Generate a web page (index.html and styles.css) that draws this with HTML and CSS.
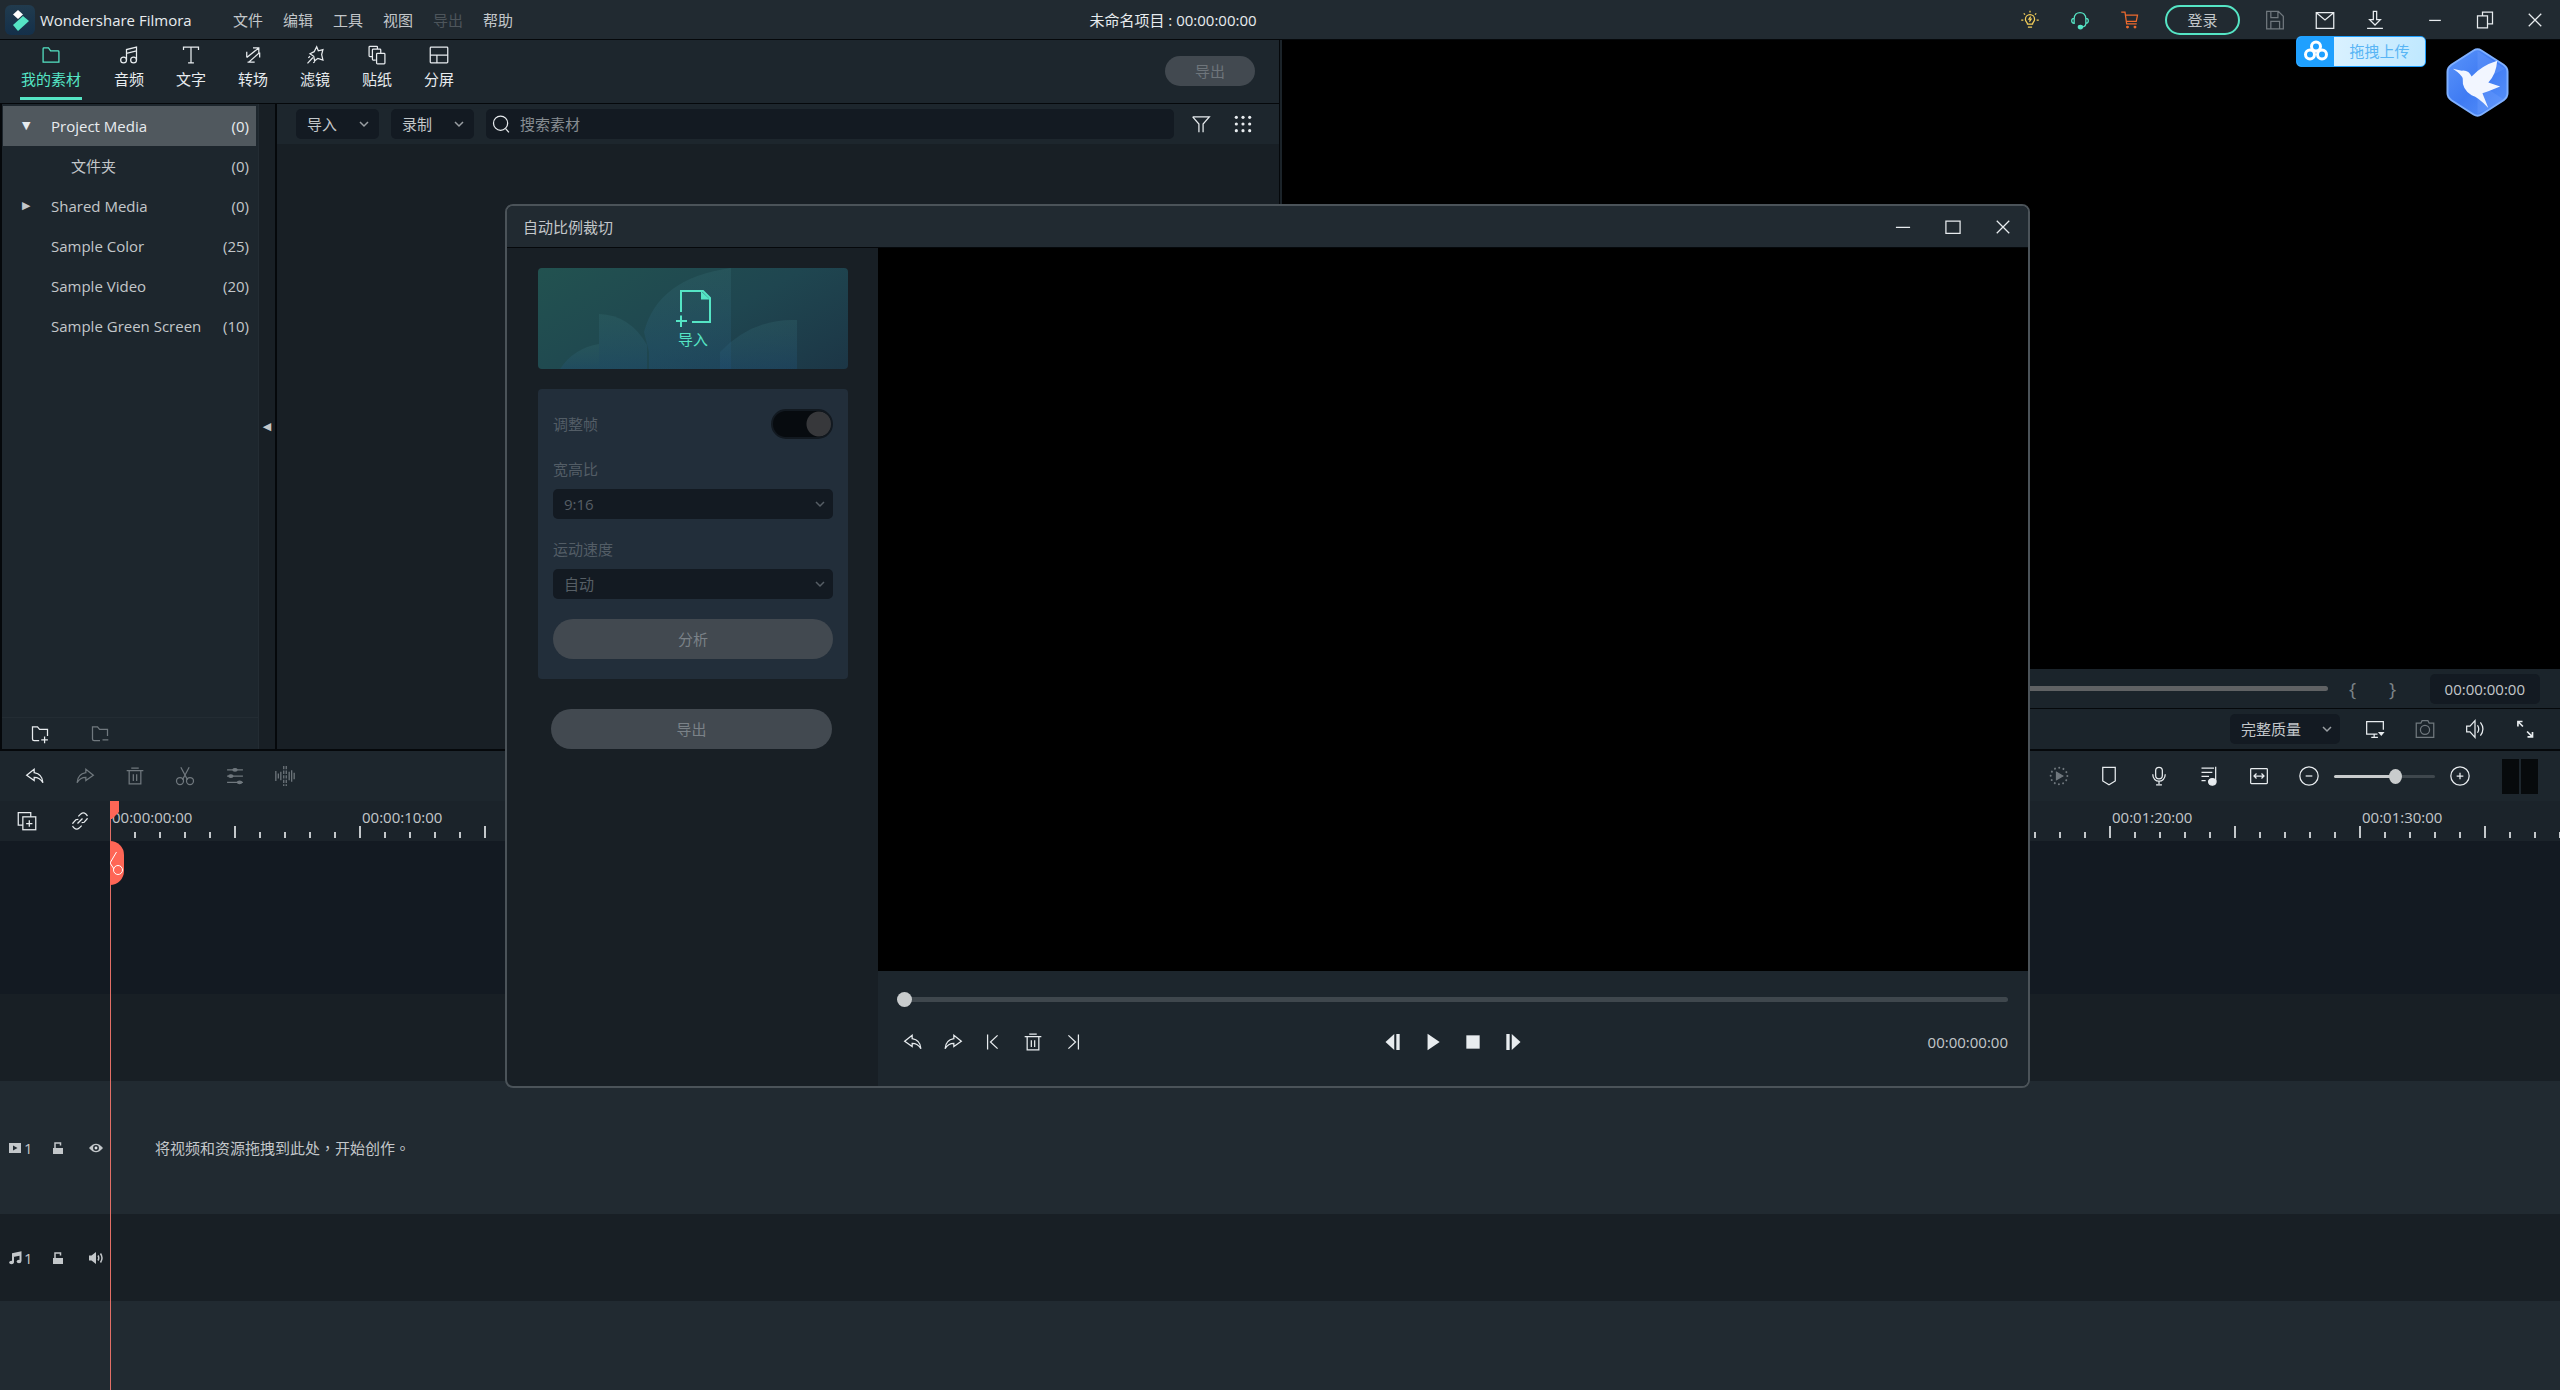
FILE: index.html
```html
<!DOCTYPE html>
<html lang="zh-CN">
<head>
<meta charset="utf-8">
<meta name="viewport" content="width=device-width, initial-scale=1">
<title>Wondershare Filmora</title>
<link rel="stylesheet" href="styles.css">
</head>
<body>
<svg class="sprite" aria-hidden="true">
  <symbol id="i-chevron" viewBox="0 0 12 12"><path d="M2 4l4 4 4-4"/></symbol>
  <symbol id="i-min" viewBox="0 0 24 24"><path d="M5 12.5h14"/></symbol>
  <symbol id="i-close" viewBox="0 0 24 24"><path d="M6 6l12 12M18 6L6 18"/></symbol>
  <symbol id="i-undo" viewBox="0 0 24 24"><path d="M11 4L2 11l9 6.500v-4c4 0 8 2 10.500 6.500-.5-8-4.500-11-10.500-12z"/></symbol>
  <symbol id="i-redo" viewBox="0 0 24 24"><path d="M13 4l9 7-9 6.500v-4c-4 0-8 2-10.500 6.500.5-8 4.500-11 10.500-12z"/></symbol>
  <symbol id="i-trash" viewBox="0 0 24 24"><path d="M7.500 2.500h9M2 5.500h20M5 5.500v16h14v-16M10 10v8M14 10v8"/></symbol>
  <symbol id="i-scissors" viewBox="0 0 24 24"><path d="M7 1.500l8 15M17 1.500L9 16.500"/><circle cx="6" cy="18" r="4.200"/><circle cx="18" cy="18" r="4.200"/></symbol>
  <symbol id="i-lock" viewBox="0 0 16 16"><path d="M3 8h10v6H3z" fill="currentColor" stroke="none"/><path d="M5 8V3h5.500v2.500"/></symbol>
  <symbol id="i-headphone" viewBox="0 0 24 24"><path d="M5 10.500C5 0.500 19 0.500 19 10.500M5 10v6c-4 0-4-6 0-6zM19 10v6c4 0 4-6 0-6zM19 16c0 3-2 4.500-5 4.500"/><ellipse cx="12.500" cy="20.500" rx="2.500" ry="2" fill="currentColor"/></symbol>
</svg>

<div class="app">
  <header class="titlebar">
    <div class="titlebar-left">
      <svg class="logo" viewBox="0 0 30 30" aria-hidden="true">
        <defs><linearGradient id="lg" x1="0" y1="0" x2="0" y2="1"><stop offset="0" stop-color="#213b4e"/><stop offset="1" stop-color="#14304a"/></linearGradient></defs>
        <rect width="30" height="30" rx="6" fill="url(#lg)"/>
        <path d="M13 5l5 4.500-5 4.500-5-4.500z" fill="#fff"/>
        <path d="M18 11l6 5-11 10-5-6z" fill="#55e5c5"/>
      </svg>
      <span class="app-name">Wondershare Filmora</span>
      <nav class="menu">
        <button>文件</button><button>编辑</button><button>工具</button><button>视图</button><button disabled>导出</button><button>帮助</button>
      </nav>
    </div>
    <div class="project-title">未命名项目 : 00:00:00:00</div>
    <div class="titlebar-right">
      <button class="cell yellow" aria-label="提示"><svg class="icon" viewBox="0 0 24 24"><path d="M9 17c0-2-2.500-3-2.500-6a5.500 5.500 0 0 1 11 0c0 3-2.500 4-2.500 6zM9.500 20.500h5M12 1v2M4.500 4l1.500 1.500M19.500 4L18 5.500M1.500 12h2.500M20 12h2.500M12.800 8l-2 3h2.500l-2 3"/></svg></button>
      <button class="cell mint" aria-label="客服"><svg class="icon"><use href="#i-headphone"/></svg></button>
      <button class="cell orange" aria-label="购物车"><svg class="icon" viewBox="0 0 24 24"><path d="M1.500 2.500H6l2 14h12M6.500 6H21l-1.500 7.500H8"/><circle cx="9" cy="20.500" r="1" fill="currentColor"/><circle cx="18" cy="20.500" r="1" fill="currentColor"/></svg></button>
      <button class="login">登录</button>
      <button class="cell dim" aria-label="保存"><svg class="icon" viewBox="0 0 24 24"><path d="M2 1.500H16l6 6v15H2zM7 1.500v7.500h8.500V1.500M7 22.500v-9H17.500v9"/></svg></button>
      <button class="cell" aria-label="消息"><svg class="icon" viewBox="0 0 24 24"><path d="M1.500 3h21v19h-21zM2 3.500l10 8.500 10-8.500"/></svg></button>
      <button class="cell" aria-label="下载"><svg class="icon" viewBox="0 0 24 24"><path d="M10 1.500h4v10h4.500L12 18 5.500 11.500H10zM2.500 22h19"/></svg></button>
      <div class="window-buttons">
        <button class="cell" aria-label="最小化"><svg class="icon"><use href="#i-min"/></svg></button>
        <button class="cell" aria-label="还原"><svg class="icon" viewBox="0 0 24 24"><path d="M3 7h12v14.500H3zM9 7V2.500h12v14h-6"/></svg></button>
        <button class="cell" aria-label="关闭"><svg class="icon" viewBox="0 0 24 24"><path d="M4.500 4.500l15 15M19.500 4.500l-15 15"/></svg></button>
      </div>
    </div>
  </header>

  <main class="workspace">
    <section class="media">
      <div class="tabs">
        <button class="tab active"><svg class="icon" viewBox="0 0 24 24"><path d="M2.500 20.500V4.500q0-1 1-1H9L11.500 7h9q1 0 1 1v12.500z"/></svg>我的素材</button>
        <button class="tab"><svg class="icon" viewBox="0 0 24 24"><circle cx="5.500" cy="18" r="3.500"/><circle cx="17.500" cy="18" r="3.500"/><path d="M9 18V5.500L21 2.500V18M9 10l12-3"/></svg>音频</button>
        <button class="tab"><svg class="icon" viewBox="0 0 24 24"><path d="M3 6V2.500h18V6M12 2.500v19M8.500 21.500h7"/></svg>文字</button>
        <button class="tab"><svg class="icon" viewBox="0 0 24 24"><path d="M12 3.500h7v6.500M19 3.500L4.500 15M4.500 8v7M12 20.500H5.500M20 9L7 20.500h7M20 9v6"/></svg>转场</button>
        <button class="tab"><svg class="icon" viewBox="0 0 24 24"><path d="M14 2l2 5 5.500-1.500-1.500 6 1.500 6.500-6-2-4 3-1-5.500L6 10.500l5-2.500zM9.500 15L3 22M6 13.500l-2 2M12 19.500l-2 2"/></svg>滤镜</button>
        <button class="tab"><svg class="icon" viewBox="0 0 24 24"><path d="M6.500 14h-3q-1 0-1-1V2.500q0-1 1-1h8q1 0 1 1V5M10.500 18h-3q-1 0-1-1V6q0-1 1-1h8q1 0 1 1v4"/><rect x="11.500" y="10" width="10" height="12.500" rx="1"/></svg>贴纸</button>
        <button class="tab"><svg class="icon" viewBox="0 0 24 24"><rect x="1.500" y="2.500" width="21" height="19" rx="1"/><path d="M1.500 12h21M9.500 12v9.500"/></svg>分屏</button>
        <button class="pill export-top" disabled>导出</button>
      </div>
      <div class="media-body">
        <aside class="sidebar">
          <ul class="tree">
            <li class="selected"><span class="arrow">▼</span><span class="name">Project Media</span><span>(0)</span></li>
            <li><span class="arrow"></span><span class="name child">文件夹</span><span>(0)</span></li>
            <li><span class="arrow">▶</span><span class="name">Shared Media</span><span>(0)</span></li>
            <li><span class="arrow"></span><span class="name">Sample Color</span><span>(25)</span></li>
            <li><span class="arrow"></span><span class="name">Sample Video</span><span>(20)</span></li>
            <li><span class="arrow"></span><span class="name">Sample Green Screen</span><span>(10)</span></li>
          </ul>
          <div class="sidebar-foot">
            <button aria-label="新建文件夹"><svg class="icon" viewBox="0 0 24 24"><path d="M11 20H5q-2 0-2-2V3.500h6L11.500 6.500H21v8M17.500 15v8M13.500 19h8"/></svg></button>
            <button class="dim" aria-label="删除文件夹"><svg class="icon" viewBox="0 0 24 24"><path d="M12 20H5q-2 0-2-2V3.500h6L11.500 6.500H21v8M15 19h7"/></svg></button>
          </div>
        </aside>
        <button class="collapse" aria-label="收起侧栏">◀</button>
        <div class="library">
          <div class="library-bar">
            <div class="select-box"><select aria-label="导入"><option>导入</option></select><svg class="chev"><use href="#i-chevron"/></svg></div>
            <div class="select-box"><select aria-label="录制"><option>录制</option></select><svg class="chev"><use href="#i-chevron"/></svg></div>
            <label class="search"><svg class="icon" viewBox="0 0 24 24"><circle cx="11.500" cy="11" r="8.500"/><path d="M17.500 17.500l4 4.500"/></svg><input type="text" placeholder="搜索素材" aria-label="搜索素材"></label>
            <button class="tool-filter" aria-label="筛选"><svg class="icon" viewBox="0 0 24 24"><path d="M2 3.500h20l-7.500 8.500v10M2 3.500L9.500 12v10"/></svg></button>
            <button aria-label="视图"><svg class="icon" viewBox="0 0 24 24"><g fill="currentColor" stroke="none"><circle cx="4" cy="4" r="1.900"/><circle cx="12" cy="4" r="1.900"/><circle cx="20" cy="4" r="1.900"/><circle cx="4" cy="12" r="1.900"/><circle cx="12" cy="12" r="1.900"/><circle cx="20" cy="12" r="1.900"/><circle cx="4" cy="20" r="1.900"/><circle cx="12" cy="20" r="1.900"/><circle cx="20" cy="20" r="1.900"/></g></svg></button>
          </div>
        </div>
      </div>
    </section>

    <section class="preview">
      <div class="screen"></div>
      <div class="preview-row scrub-row">
        <input class="range scrub" type="range" min="0" max="100" value="0" aria-label="播放进度">
        <button class="brace" aria-label="入点">{</button>
        <button class="brace" aria-label="出点">}</button>
        <span class="time-box">00:00:00:00</span>
      </div>
      <div class="preview-row options-row">
        <div class="select-box quality"><select aria-label="预览质量"><option>完整质量</option></select><svg class="chev"><use href="#i-chevron"/></svg></div>
        <button class="cell" aria-label="显示器"><svg class="icon" viewBox="0 0 24 24"><path d="M15 18H2V3h20v10M11 18v4M7.500 22h8"/><path d="M15.500 15.500h8l-4 5z" fill="currentColor" stroke="none"/></svg></button>
        <button class="cell dim" aria-label="快照"><svg class="icon" viewBox="0 0 24 24"><path d="M1.500 5H7l1.500-3h7L17 5h5.500v17h-21z"/><circle cx="12" cy="13" r="5.500"/></svg></button>
        <button class="cell" aria-label="音量"><svg class="icon" viewBox="0 0 24 24"><path d="M2 8.500h4l6-6.500v20l-6-6.500H2zM15 7.500q3 4.500 0 9M18.500 4q6 8 0 16"/></svg></button>
        <button class="cell" aria-label="全屏"><svg class="icon" viewBox="0 0 24 24"><path d="M3.500 9V3H9M3.500 3l6 6M21 15.500V21.500h-6M21 21.500l-6.500-6.500" stroke-width="2"/></svg></button>
      </div>
    </section>
  </main>

  <section class="timeline">
    <div class="timeline-tools">
      <button class="cell" aria-label="撤销"><svg class="icon"><use href="#i-undo"/></svg></button>
      <button class="cell dim" aria-label="重做"><svg class="icon"><use href="#i-redo"/></svg></button>
      <button class="cell dim" aria-label="删除"><svg class="icon"><use href="#i-trash"/></svg></button>
      <button class="cell dim" aria-label="分割"><svg class="icon"><use href="#i-scissors"/></svg></button>
      <button class="cell dim" aria-label="调整"><svg class="icon" viewBox="0 0 24 24"><path d="M2.500 4.500h19M2.500 12h19M2.500 19.500h19"/><g fill="currentColor"><ellipse cx="12" cy="4.500" rx="2.500" ry="1.500"/><ellipse cx="7" cy="12" rx="2.500" ry="1.500"/><ellipse cx="17.500" cy="19.500" rx="2.500" ry="1.500"/></g></svg></button>
      <button class="cell dim" aria-label="音频波形"><svg class="icon" viewBox="0 0 24 24"><path d="M1 6v12M4 9v6M7 7v10M17 7v10M20 5v14M23 8v8"/><path d="M10.500 0v24M13.500 0v24" stroke-dasharray="4 1.500"/></svg></button>
      <div class="tools-right">
        <button class="cell dim" aria-label="渲染"><svg class="icon" viewBox="0 0 24 24"><circle cx="12" cy="12" r="10" stroke-width="2.400" stroke-linecap="round" stroke-dasharray="0.010 5.226"/><path d="M9 7.500l7.500 4.500L9 16.500z" fill="currentColor"/></svg></button>
        <button class="cell" aria-label="标记"><svg class="icon" viewBox="0 0 24 24"><path d="M4.500 1.500h15V18L12 22.500 4.500 18z"/></svg></button>
        <button class="cell" aria-label="录音"><svg class="icon" viewBox="0 0 24 24"><rect x="8" y="1.500" width="8" height="14" rx="4"/><path d="M4.500 10c0 11 15 11 15 0M12 18.500v3M8.500 22.500h7"/></svg></button>
        <button class="cell" aria-label="音频混合"><svg class="icon" viewBox="0 0 24 24"><path d="M3 2.500h15M3 7.500h13M3 12.500h9M3 17.500h5M20 1v17"/><ellipse cx="16" cy="19" rx="4.500" ry="4" fill="currentColor"/></svg></button>
        <button class="cell" aria-label="适应窗口"><svg class="icon" viewBox="0 0 24 24"><rect x="2" y="3" width="20" height="18" rx="1"/><path d="M6.500 12h11M9 9l-3 3 3 3M15 9l3 3-3 3"/></svg></button>
        <button class="cell" aria-label="缩小"><svg class="icon" viewBox="0 0 24 24"><circle cx="12" cy="12" r="11"/><path d="M8 12h8"/></svg></button>
        <input class="range zoom" type="range" min="0" max="100" value="62" aria-label="缩放">
        <button class="cell" aria-label="放大"><svg class="icon" viewBox="0 0 24 24"><circle cx="12" cy="12" r="11"/><path d="M8 12h8M12 8v8"/></svg></button>
        <div class="meters"><i></i><i></i></div>
      </div>
    </div>
    <div class="ruler">
      <div class="ruler-head">
        <button aria-label="添加轨道"><svg class="icon" viewBox="0 0 24 24"><path d="M7 17H1.500V2h15v5"/><rect x="7" y="7" width="15.500" height="15.500"/><path d="M11 15h7.500M14.750 11v8"/></svg></button>
        <button aria-label="链接"><svg class="icon" viewBox="0 0 24 24"><path d="M10 6.500l3-3q3-2.500 6 0t1.500 6l-3.500 4-3 .5M14 17.500l-3 3q-3 2.500-6 0t-1.500-6l3.500-4 3-.5M9 15l6-6" stroke-dasharray="14 2.500"/></svg></button>
      </div>
      <div class="ruler-scale">
        <span>00:00:00:00</span><span>00:00:10:00</span><span>00:00:20:00</span><span>00:00:30:00</span><span>00:00:40:00</span><span>00:00:50:00</span><span>00:01:00:00</span><span>00:01:10:00</span><span>00:01:20:00</span><span>00:01:30:00</span>
      </div>
    </div>
    <div class="track blank-deep"></div>
    <div class="track blank-dark"></div>
    <div class="track video-track">
      <div class="track-head">
        <svg class="mini" viewBox="0 0 16 16"><path d="M2 3h12v10H2zM6 5.500v5l4.500-2.500z" fill="currentColor" fill-rule="evenodd" stroke="none"/></svg><span class="num">1</span>
        <button aria-label="锁定"><svg class="mini"><use href="#i-lock"/></svg></button>
        <button aria-label="可见"><svg class="mini" viewBox="0 0 16 16"><path d="M1 8q7-8.500 14 0-7 8.500-14 0z" fill="currentColor" stroke="none"/><circle cx="8" cy="8" r="2.200" fill="#dfe3e6" stroke="#212a31"/></svg></button>
      </div>
      <p class="drop-hint" lang="zh-TW">将视频和资源拖拽到此处，开始创作。</p>
    </div>
    <div class="track audio-track">
      <div class="track-head">
        <svg class="mini" viewBox="0 0 16 16"><path d="M6 12.500V4l7.500-1.500V11M6 6l7.500-1.500" stroke-width="2"/><ellipse cx="4.500" cy="12.500" rx="2.300" ry="1.800" fill="currentColor" stroke="none"/><ellipse cx="12" cy="11.500" rx="2.300" ry="1.800" fill="currentColor" stroke="none"/></svg><span class="num">1</span>
        <button aria-label="锁定"><svg class="mini"><use href="#i-lock"/></svg></button>
        <button aria-label="静音"><svg class="mini" viewBox="0 0 16 16"><path d="M1 5.500h2.500L8 2v12l-4.500-3.500H1z" fill="currentColor" stroke="none"/><path d="M10 5.500q1.500 2.500 0 5M12.500 3.500q3 4.500 0 9"/></svg></button>
      </div>
    </div>
    <div class="track blank-light"></div>
    <div class="playhead">
      <svg class="flag" viewBox="0 0 9 18"><path d="M0 0h9v11l-7 7H0z" fill="#ff6656"/></svg>
      <svg class="cutter" viewBox="0 0 14 44"><path d="M0 0a14 14 0 0 1 14 14v16a14 14 0 0 1-14 14z" fill="#ff6656"/><path d="M6.500 11L0 22l4 6" fill="none" stroke="#fff"/><circle cx="8" cy="29" r="4.500" fill="none" stroke="#fff"/></svg>
    </div>
  </section>

  <div class="upload-badge">
    <svg viewBox="0 0 37 31" aria-hidden="true"><g fill="none" stroke="#fff" stroke-width="3"><circle cx="19" cy="10.500" r="4.500"/><circle cx="13" cy="18.500" r="4.500"/><circle cx="25" cy="18.500" r="4.500"/></g></svg>
    <span>拖拽上传</span>
  </div>
  <svg class="bird-badge" viewBox="0 0 64 70" aria-hidden="true">
    <defs><linearGradient id="bg" x1="0" y1="0" x2="1" y2="1"><stop offset="0" stop-color="#5b95fa"/><stop offset=".5" stop-color="#3f7bf3"/><stop offset="1" stop-color="#5a94fb"/></linearGradient></defs>
    <path d="M28 2.500q4-2.500 8 0L58.500 17q4 3 4 7v22q0 4-4 7L36 67.500q-4 2.500-8 0L5.500 53q-4-3-4-7V24q0-4 4-7z" fill="url(#bg)" stroke="#7fb0ff" stroke-width="2"/>
    <path d="M32 35V3l28 18zM32 35l28 18-28 14z" fill="#7aa8ff" opacity=".25"/>
    <path d="M7 21l9 2q7-1 10 6Q36 18 52 13q-1 14-9 22l12 4-12 5-6 2 6 15Q33 50 26 48q-10-6-9-17-1-4-10-10z" fill="#f2f6ff"/>
  </svg>

  <div class="dialog" role="dialog" aria-labelledby="dlg-title">
    <header class="dialog-title">
      <h1 id="dlg-title">自动比例裁切</h1>
      <button class="cell" aria-label="最小化"><svg class="icon" viewBox="0 0 24 24"><path d="M3.500 12.500h17"/></svg></button>
      <button class="cell" aria-label="最大化"><svg class="icon" viewBox="0 0 24 24"><path d="M3.500 5h17v14.500h-17z"/></svg></button>
      <button class="cell" aria-label="关闭"><svg class="icon" viewBox="0 0 24 24"><path d="M4.500 4.500l15 15M19.500 4.500l-15 15"/></svg></button>
    </header>
    <div class="dialog-body">
      <div class="dialog-side">
        <button class="import-card">
          <svg class="petals" viewBox="0 0 310 101" preserveAspectRatio="none" aria-hidden="true">
            <defs><linearGradient id="pt" x1="0" y1="0" x2="0" y2="1"><stop offset="0" stop-color="#3a7378" stop-opacity=".25"/><stop offset="1" stop-color="#205078" stop-opacity=".35"/></linearGradient></defs>
            <g fill="url(#pt)"><path d="M22 101Q36 80 61 76V101z"/><path d="M61 46Q92 47 109 77V101H61z"/><path d="M106 64Q120 10 193 0V101H111V84z"/><path d="M182 101V84Q215 50 259 52V101z"/></g>
          </svg>
          <svg class="import-icon" viewBox="0 0 36 38" aria-hidden="true"><path d="M6 23V2h22l7 7v24H17M1 32h11M6 26.500V38" fill="none" stroke="#55e5c5" stroke-width="2"/><path d="M26 2l9 8.500h-9z" fill="#55e5c5"/></svg>
          <span>导入</span>
        </button>
        <div class="settings">
          <div class="setting-toggle"><label for="adj">调整帧</label><input id="adj" class="toggle" type="checkbox" checked disabled></div>
          <label for="ratio">宽高比</label>
          <div class="select-box"><select id="ratio" disabled><option>9:16</option></select><svg class="chev"><use href="#i-chevron"/></svg></div>
          <label for="speed">运动速度</label>
          <div class="select-box"><select id="speed" disabled><option>自动</option></select><svg class="chev"><use href="#i-chevron"/></svg></div>
          <button class="pill" disabled>分析</button>
        </div>
        <button class="pill export-dialog" disabled>导出</button>
      </div>
      <div class="dialog-main">
        <div class="screen"></div>
        <div class="dialog-controls">
          <input class="range seek" type="range" min="0" max="100" value="0" aria-label="进度">
          <div class="control-row">
            <div class="controls-left">
              <button aria-label="撤销"><svg class="icon"><use href="#i-undo"/></svg></button>
              <button aria-label="重做"><svg class="icon"><use href="#i-redo"/></svg></button>
              <button aria-label="上一帧"><svg class="icon" viewBox="0 0 24 24"><path d="M5.500 3v18M17.500 4L9 12l8.500 8"/></svg></button>
              <button aria-label="删除"><svg class="icon"><use href="#i-trash"/></svg></button>
              <button aria-label="下一帧"><svg class="icon" viewBox="0 0 24 24"><path d="M18.500 3v18M6.500 4L15 12l-8.500 8"/></svg></button>
            </div>
            <div class="controls-mid">
              <button aria-label="后退"><svg class="icon" viewBox="0 0 24 24"><path d="M13.500 2.500v19L3 12zM16 2.500h4v19h-4z" fill="currentColor" stroke="none"/></svg></button>
              <button aria-label="播放"><svg class="icon" viewBox="0 0 24 24"><path d="M5.500 2L20 12 5.500 22z" fill="currentColor" stroke="none"/></svg></button>
              <button aria-label="停止"><svg class="icon" viewBox="0 0 24 24"><path d="M4 4h16v16H4z" fill="currentColor" stroke="none"/></svg></button>
              <button aria-label="前进"><svg class="icon" viewBox="0 0 24 24"><path d="M10.500 2.500v19L21 12zM4 2.500h4v19H4z" fill="currentColor" stroke="none"/></svg></button>
            </div>
            <span class="dialog-time">00:00:00:00</span>
          </div>
        </div>
      </div>
    </div>
  </div>
</div>
</body>
</html>
```
FILE: styles.css
```css
:root {
  --panel: #1d262d;
  --bar: #212a31;
  --dark: #181f25;
  --deep: #131a22;
  --line: #05080b;
  --text: #c3c7ca;
  --bright: #e8ecef;
  --dim: #70787e;
  --mint: #55e5c5;
}

* { box-sizing: border-box; }

body {
  margin: 0;
  background: var(--panel);
  color: var(--text);
  font: 15px/20px "Open Sans", "Noto Sans CJK SC", sans-serif;
}

button, input, select { font: inherit; color: inherit; }
button {
  display: flex;
  align-items: center;
  justify-content: center;
  padding: 0;
  border: 0;
  background: none;
}
ul, p, h1 { margin: 0; padding: 0; }

.sprite { display: none; }
.icon, .mini, .chev {
  flex: none;
  fill: none;
  stroke: currentColor;
  stroke-width: 1.5;
}
.icon { width: 20px; height: 20px; }
.mini { width: 16px; height: 16px; }
.chev { width: 12px; height: 12px; color: #9a9fa3; }

.cell { width: 50px; height: 100%; color: var(--bright); }
.dim, .cell.dim { color: var(--dim); }
.cell.yellow { color: #f5cf5a; }
.cell.mint { color: var(--mint); }
.cell.orange { color: #ee6a2e; }

.app {
  position: relative;
  display: grid;
  grid-template-columns: minmax(0, 1fr);
  grid-template-rows: 40px 1fr auto;
  min-height: 100vh;
  overflow: hidden;
}

/* title bar */
.titlebar {
  display: flex;
  background: var(--bar);
  border-bottom: 1px solid var(--line);
}
.titlebar-left { display: flex; align-items: center; padding-left: 5px; }
.logo { width: 30px; height: 30px; }
.app-name { margin-left: 5px; width: 193px; color: var(--bright); white-space: nowrap; }
.menu { display: flex; gap: 20px; }
.menu button:disabled { color: #4d555b; }
.project-title { flex: 1; align-self: center; text-align: center; color: var(--bright); }
.titlebar-right {
  display: flex;
  align-items: center;
  justify-content: flex-end;
  width: 28.4%;
}
.login {
  width: 75px;
  height: 30px;
  margin: 0 10px;
  border: 2px solid var(--mint);
  border-radius: 15px;
}
.window-buttons { display: flex; height: 100%; margin-left: 10px; }

/* workspace */
.workspace { display: grid; grid-template-columns: 1fr 1fr; }
.media {
  display: flex;
  flex-direction: column;
  border-right: 1px solid var(--line);
}
.tabs {
  display: flex;
  height: 64px;
  padding: 0 24px 0 20px;
  border-bottom: 1px solid var(--line);
}
.tab {
  flex-direction: column;
  justify-content: flex-start;
  gap: 4px;
  width: 62px;
  height: 60px;
  padding-top: 5px;
  color: var(--bright);
  border-bottom: 3px solid transparent;
}
.tab.active { margin-right: 16px; color: var(--mint); border-color: var(--mint); }
.pill {
  height: 40px;
  border-radius: 20px;
  background: #424950;
  color: #7b8288;
}
.export-top { width: 90px; height: 30px; margin: 16px 0 0 auto; color: #6e757b; }

.media-body { display: flex; flex: 1; }
.sidebar {
  display: flex;
  flex-direction: column;
  width: 259px;
  border-left: 2px solid var(--line);
  border-right: 1px solid #232c33;
}
.tree { flex: 1; padding: 2px 2px 0 1px; list-style: none; }
.tree li { display: flex; align-items: center; height: 40px; padding-right: 7px; }
.tree .selected { background: #50585e; color: var(--bright); }
.arrow { width: 48px; padding-left: 19px; font: 11px/20px "DejaVu Sans", sans-serif; }
.name { flex: 1; }
.name.child { padding-left: 20px; }
.sidebar-foot {
  display: flex;
  gap: 40px;
  height: 32px;
  padding-left: 28px;
  border-top: 1px solid #232c33;
  color: var(--bright);
}
.collapse {
  width: 16px;
  background: var(--dark);
  font: 11px/20px "DejaVu Sans", sans-serif;
}
.library { flex: 1; border-left: 2px solid var(--line); background: var(--dark); }
.library-bar {
  display: flex;
  align-items: center;
  gap: 12px;
  height: 40px;
  padding: 0 26px 0 19px;
  background: var(--panel);
  color: var(--bright);
}

.select-box {
  display: flex;
  align-items: center;
  width: 83px;
  height: 30px;
  padding-right: 9px;
  border-radius: 5px;
  background: var(--deep);
  color: var(--text);
}
.select-box select {
  flex: 1;
  min-width: 0;
  height: 30px;
  padding: 0 0 0 11px;
  border: 0;
  background: none;
  appearance: none;
  opacity: 1;
}
.search {
  display: flex;
  flex: 1;
  align-items: center;
  height: 30px;
  padding-left: 5px;
  border-radius: 5px;
  background: var(--deep);
}
.search input { flex: 1; margin-left: 9px; padding: 0; border: 0; background: none; outline: 0; }
.search input::placeholder { color: #868c91; opacity: 1; }
.tool-filter { margin: 0 10px 0 5px; }

/* preview */
.preview {
  display: flex;
  flex-direction: column;
  border-left: 2px solid #1b2329;
}
.screen { flex: 1; background: #000; }
.preview-row { display: flex; align-items: center; height: 40px; background: #1b242b; }
.scrub-row { padding: 0 20px; border-bottom: 1px solid var(--line); }
.options-row { justify-content: flex-end; padding-right: 10px; }
.quality { width: 110px; margin-right: 10px; padding-right: 7px; }
.brace { width: 40px; color: #7d8489; font-size: 19px; }
.brace:first-of-type { margin-left: 5px; }
.time-box {
  margin-left: 17px;
  padding: 5px 15px;
  border-radius: 5px;
  background: var(--deep);
}

.range { --track: #3f474d; height: 16px; margin: 0; appearance: none; background: none; }
.range::-webkit-slider-runnable-track { height: 5px; border-radius: 3px; background: var(--track); }
.range::-webkit-slider-thumb {
  appearance: none;
  width: 15px;
  height: 15px;
  margin-top: -5px;
  border-radius: 50%;
  background: #c9cccd;
}
.scrub { --track: #606264; flex: 1; }

/* timeline */
.timeline { position: relative; border-top: 2px solid var(--line); }
.timeline-tools { display: flex; height: 50px; padding-left: 10px; }
.tools-right { display: flex; align-items: center; margin-left: auto; padding-right: 22px; }
.zoom { --track: linear-gradient(90deg, #c9cccd 60%, #3f474d 60%); width: 101px; }
.zoom::-webkit-slider-runnable-track { height: 3px; }
.zoom::-webkit-slider-thumb { width: 13px; margin-top: -6px; }
.meters { display: flex; gap: 2px; margin-left: 17px; }
.meters i { width: 17px; height: 35px; background: #070a0c; }

.ruler { display: flex; height: 40px; background: #1b232a; }
.ruler-head {
  display: flex;
  flex: none;
  gap: 33px;
  width: 110px;
  padding-left: 17px;
  color: var(--bright);
}
.ruler-scale {
  display: flex;
  flex: 1;
  min-width: 0;
  overflow: hidden;
  background:
    linear-gradient(90deg, #c3c7ca 2px, transparent 2px) 124px 25px / 125px 12px repeat-x,
    linear-gradient(90deg, #c3c7ca 2px, transparent 2px) 24px 31px / 25px 6px repeat-x;
}
.ruler-scale span { flex: none; width: 250px; padding: 6px 0 0 2px; }

.track { display: flex; align-items: center; background: var(--bar); }
.blank-deep { height: 153px; background: var(--deep); }
.blank-dark { height: 87px; background: var(--dark); }
.video-track { height: 133px; }
.audio-track { height: 87px; background: var(--dark); }
.blank-light { height: 89px; }
.track-head { display: flex; align-items: center; width: 110px; padding-left: 7px; }
.num { width: 27px; padding-left: 1px; }
.track-head button + button { margin-left: 22px; }
.drop-hint { padding-left: 45px; font-family: "Noto Sans CJK TC", sans-serif; }

.playhead {
  position: absolute;
  top: 50px;
  bottom: 0;
  left: 110px;
  border-left: 1px solid #e26f66;
}
.flag, .cutter { position: absolute; left: -1px; }
.flag { top: 0; width: 9px; height: 18px; }
.cutter { top: 40px; width: 14px; height: 44px; }

/* floating helpers of other programs */
.upload-badge {
  position: absolute;
  top: 36px;
  right: 134px;
  display: flex;
  width: 130px;
  height: 31px;
  border: 1px solid #1fa0ff;
  border-radius: 5px;
  background: linear-gradient(100deg, #e4f5ff, #bfe8ff);
  overflow: hidden;
  color: #58b5f5;
}
.upload-badge svg { width: 37px; height: 31px; margin-top: -1px; background: #1fa0ff; }
.upload-badge span { flex: 1; padding-top: 4px; text-align: center; }
.bird-badge { position: absolute; top: 48px; right: 51px; width: 63px; height: 69px; }

/* auto reframe dialog */
.dialog {
  position: absolute;
  inset: 204px 530px 302px 505px;
  display: flex;
  flex-direction: column;
  border: 2px solid #4b5359;
  border-radius: 8px;
  background: var(--dark);
  overflow: hidden;
}
.dialog-title {
  display: flex;
  height: 42px;
  padding-left: 16px;
  border-bottom: 1px solid var(--line);
  background: var(--bar);
}
.dialog-title h1 { flex: 1; align-self: center; font: inherit; }
.dialog-body { display: flex; flex: 1; }
.dialog-side { display: flex; flex-direction: column; width: 371px; padding: 20px 30px 0 31px; }
.import-card {
  position: relative;
  flex-direction: column;
  gap: 2px;
  height: 101px;
  border-radius: 4px;
  background: linear-gradient(150deg, #225250, #1f4650 55%, #1c3646);
  color: var(--mint);
  overflow: hidden;
}
.petals { position: absolute; inset: 0; width: 100%; height: 100%; }
.import-icon { position: relative; width: 36px; height: 38px; }
.import-card span { position: relative; }

.settings {
  display: flex;
  flex-direction: column;
  gap: 10px;
  margin-top: 20px;
  padding: 20px 15px;
  border-radius: 4px;
  background: #222e3a;
  color: #535d66;
}
.setting-toggle {
  display: flex;
  align-items: center;
  justify-content: space-between;
  height: 30px;
  margin-bottom: 10px;
}
.settings .select-box { width: auto; margin-bottom: 10px; padding-right: 7px; color: #565e65; }
.settings .chev { color: #565e65; }
.toggle {
  width: 62px;
  height: 30px;
  margin: 0;
  padding: 2px;
  appearance: none;
  border: 2px solid #121920;
  border-radius: 15px;
  background: radial-gradient(circle at 46px 13px, #37383b 12px, #070b0f 13px);
}
.export-dialog { margin: 30px 16px 0 13px; }

.dialog-main { display: flex; flex: 1; flex-direction: column; }
.dialog-controls { height: 115px; padding: 20px 20px 0 19px; background: var(--panel); }
.seek { display: block; width: 100%; }
.control-row {
  display: grid;
  grid-template-columns: 1fr auto 1fr;
  align-items: center;
  height: 70px;
  color: var(--bright);
}
.controls-left, .controls-mid { display: flex; }
.control-row button { width: 40px; height: 30px; }
.controls-left { margin-left: -4px; }
.dialog-time { text-align: right; color: var(--text); }
```
